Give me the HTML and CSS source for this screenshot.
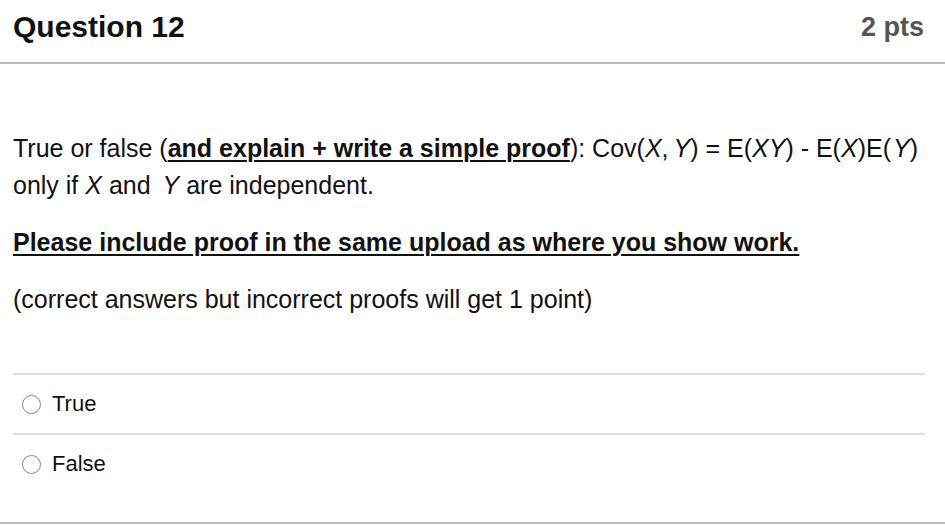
FILE: index.html
```html
<!DOCTYPE html>
<html>
<head>
<meta charset="utf-8">
<link rel="stylesheet" href="styles.css">
</head>
<body>
<div class="quiz">
  <div class="header">
    <h2 class="title">Question 12</h2>
    <div class="pts">2 pts</div>
  </div>
  <div class="body">
    <p class="para">True or false (<b class="ul">and explain + write a simple proof</b>): Cov(<i>X</i>,&#8201;<i>Y</i>) = E(<i>XY</i>) - E(<i>X</i>)E(&#8202;<i>Y</i>)<br>only if <i>X</i> and &#8201;<i>Y</i> are independent.</p>
    <p class="para"><b class="ul">Please include proof in the same upload as where you show work.</b></p>
    <p class="para">(correct answers but incorrect proofs will get 1 point)</p>
  </div>
  <div class="answers">
    <div class="answer"><span class="radio"></span><span class="label">True</span></div>
    <div class="answer"><span class="radio"></span><span class="label">False</span></div>
  </div>
</div>
</body>
</html>
```
FILE: styles.css
```css
html, body {
  margin: 0;
  padding: 0;
  background: #ffffff;
}
body {
  font-family: "Liberation Sans", Arial, sans-serif;
  color: #111111;
}
.quiz {
  width: 945px;
  height: 530px;
  display: flex;
  flex-direction: column;
}
.header {
  height: 64px;
  box-sizing: border-box;
  display: flex;
  justify-content: space-between;
  align-items: center;
  padding: 0 21px 8px 13px;
  border-bottom: 2px solid #bcbcbc;
}
.title {
  margin: 0;
  font-size: 30px;
  font-weight: bold;
  color: #111;
}
.pts {
  font-size: 27px;
  font-weight: bold;
  color: #555555;
}
.body {
  padding: 66px 13px 0 13px;
  height: 309px;
  box-sizing: border-box;
}
.para {
  margin: 0 0 20px 0;
  font-size: 25px;
  line-height: 37px;
}
.ul {
  text-decoration: underline;
  text-decoration-thickness: 2px;
  text-underline-offset: 3px;
}
.answers {
  margin: 0 20px 0 13px;
  border-top: 2px solid #e0e0e0;
}
.answer {
  height: 58px;
  display: flex;
  align-items: center;
  gap: 11px;
  padding-left: 9px;
  font-size: 22px;
}
.answer + .answer {
  border-top: 2px solid #e0e0e0;
}
.radio {
  border: 1.5px solid #888;
  border-radius: 50%;
  box-sizing: border-box;
  width: 19px;
  height: 19px;
}
.quiz::after {
  content: "";
  display: block;
  margin-top: auto;
  margin-bottom: 6px;
  border-top: 2px solid #bcbcbc;
}
```
